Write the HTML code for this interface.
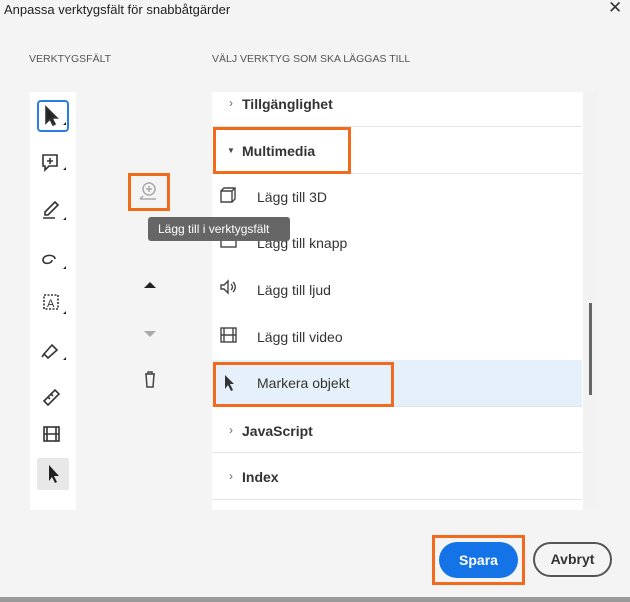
<!DOCTYPE html>
<html><head><meta charset="utf-8"><style>
*{margin:0;padding:0;box-sizing:border-box}
body{width:630px;height:602px;background:#f4f4f4;font-family:"Liberation Sans",sans-serif;position:relative;overflow:hidden;color:#222}
.a{position:absolute}
.title{left:4px;top:2px;font-size:13px;color:#222}
.x{left:608px;top:-2px;font-size:17px;color:#333}
.hdr{font-size:10.5px;color:#555;top:53px}
.lp{left:30px;top:92px;width:46px;height:418px;background:#fff}
.rp{left:212px;top:92px;width:386px;height:418px;background:#fff}
.sb{left:583px;top:92px;width:15px;height:418px;background:#f2f2f2}
.th{left:589px;top:303px;width:3px;height:92px;background:#666}
.row{position:absolute;left:212px;width:370px;border-bottom:1.5px solid #e4e4e4}
.cat{font-weight:bold;font-size:14px;color:#333}
.it{font-size:14px;color:#333}
.ob{position:absolute;border:3px solid #f26a1b;z-index:5}
.chev{position:absolute;left:17px;font-size:12px;color:#666}
</style></head><body>
<div class="a title">Anpassa verktygsfält för snabbåtgärder</div>
<div class="a x">✕</div>
<div class="a hdr" style="left:29px">VERKTYGSFÄLT</div>
<div class="a hdr" style="left:212px">VÄLJ VERKTYG SOM SKA LÄGGAS TILL</div>
<div class="a lp"></div>
<div class="a" style="left:37px;top:100px;width:32px;height:32px;border:2px solid #2a7de1;border-radius:4px"></div>
<svg class="a" style="left:30px;top:92px" width="46" height="418" viewBox="0 0 46 418" fill="none" stroke="#333" stroke-width="1.6">
<path d="M16 15 L16 31 L20 27 L23 33 L25 32 L22 26 L27 26 Z" fill="#222"/>
<path d="M13 63 h14 v11 h-8 l-4 4 v-4 h-2 z M20 66 v6 M17 69 h6"/>
<path d="M15 120 l10 -10 l3 3 l-10 10 h-3 z M13 126 h12" />
<path d="M25 167 c0-5 -12-5 -12 1 c0 5 9 4 9 0" />
<rect x="14" y="203" width="14" height="14" stroke-dasharray="2 1.5"/>
<text x="17" y="215" font-size="11" fill="#333" stroke="none" font-family="Liberation Sans">A</text>
<path d="M14 262 l8 -9 l5 5 l-9 8 z M14 262 l-2 3"/>
<path d="M14 309 l11 -11 l4 4 l-11 11 z M18 305 l2 2 M21 302 l2 2"/>
<rect x="14" y="335" width="15" height="14"/><path d="M17 335 v14 M26 335 v14 M14 342 h15"/>
<rect x="7" y="366" width="32" height="32" rx="2" fill="#e8e8e8" stroke="none"/>
<path d="M19 373 L19 389 L22 385 L25 391 L27 390 L24 384 L29 384 Z" fill="#222" stroke="none"/>
<path d="M33 33 l3 -3 v3z M33 78 l3-3v3z M33 128 l3-3v3z M33 177 l3-3v3z M33 222 l3-3v3z M33 268 l3-3v3z" fill="#222" stroke="none"/>
</svg>
<div class="ob" style="left:128px;top:173px;width:42px;height:38px"></div>
<svg class="a" style="left:136px;top:180px" width="26" height="24" fill="none" stroke="#aaa" stroke-width="1.5"><circle cx="13" cy="9" r="6"/><path d="M13 6v6M10 9h6M4 19h16M4 19l3-3"/></svg>
<svg class="a" style="left:140px;top:275px" width="20" height="120"><path d="M4 13 l6-6 6 6z" fill="#222"/><path d="M4 56 l6 6 6-6z" fill="#aaa"/><path d="M5 99h10M8 99v-2h4v2M6 99l1 13h6l1-13" fill="none" stroke="#444" stroke-width="1.5"/></svg>
<div class="a rp"></div>
<div class="a sb"></div><div class="a th"></div>
<div class="row" style="top:92px;height:35px"><span class="a cat" style="left:30px;top:4px">Tillgänglighet</span><span class="chev" style="top:4px">›</span></div>
<div class="row" style="top:127px;height:47px"><span class="a cat" style="left:30px;top:16px">Multimedia</span><span class="a" style="left:15px;top:19px;font-size:8px;color:#444">▼</span></div>
<div class="row" style="top:174px;height:46px;border:none"><span class="a it" style="left:45px;top:15px">Lägg till 3D</span></div>
<div class="row" style="top:220px;height:46px;border:none"><span class="a it" style="left:45px;top:15px">Lägg till knapp</span></div>
<div class="row" style="top:266px;height:46px;border:none"><span class="a it" style="left:45px;top:16px">Lägg till ljud</span></div>
<div class="row" style="top:312px;height:48px;border:none"><span class="a it" style="left:45px;top:17px">Lägg till video</span></div>
<div class="row" style="top:360px;height:47px;background:#e6f0fa"><span class="a it" style="left:45px;top:15px">Markera objekt</span></div>
<div class="row" style="top:407px;height:46px"><span class="a cat" style="left:30px;top:16px">JavaScript</span><span class="chev" style="top:16px">›</span></div>
<div class="row" style="top:453px;height:47px"><span class="a cat" style="left:30px;top:16px">Index</span><span class="chev" style="top:16px">›</span></div>
<svg class="a" style="left:218px;top:185px" width="22" height="220" fill="none" stroke="#444" stroke-width="1.4">
<path d="M3 6h11v11h-11z M3 6l3-3h11v11l-3 3 M14 6l3-3"/>
<rect x="3" y="51" width="15" height="11"/>
<path d="M3 100h3l4-4v12l-4-4h-3z M13 99c2 2 2 4 0 6 M15 97c3 3 3 7 0 10"/>
<rect x="3" y="143" width="15" height="14"/><path d="M6 143v14M15 143v14M3 150h15"/>
<path d="M7 190 L7 204 L10 200 L13 206 L15 205 L12 199 L16 199 Z" fill="#333" stroke="none"/>
</svg>
<div class="ob" style="left:213px;top:127px;width:138px;height:47px"></div>
<div class="ob" style="left:213px;top:362px;width:181px;height:45px"></div>
<div class="a" style="left:148px;top:217px;width:142px;height:24px;background:#666;border-radius:3px;color:#fff;font-size:12px;padding:5px 0 0 10px;z-index:10;white-space:nowrap">Lägg till i verktygsfält</div>
<div class="ob" style="left:432px;top:535px;width:93px;height:50px"></div>
<div class="a" style="left:439px;top:542px;width:79px;height:36px;background:#1473e6;border-radius:18px;color:#fff;font-weight:bold;font-size:14px;text-align:center;line-height:36px;z-index:6">Spara</div>
<div class="a" style="left:533px;top:542px;width:79px;height:35px;border:2px solid #555;border-radius:18px;color:#333;font-weight:bold;font-size:14px;text-align:center;line-height:31px">Avbryt</div>
<div class="a" style="left:0;top:597px;width:630px;height:5px;background:#999"></div>
</body></html>
